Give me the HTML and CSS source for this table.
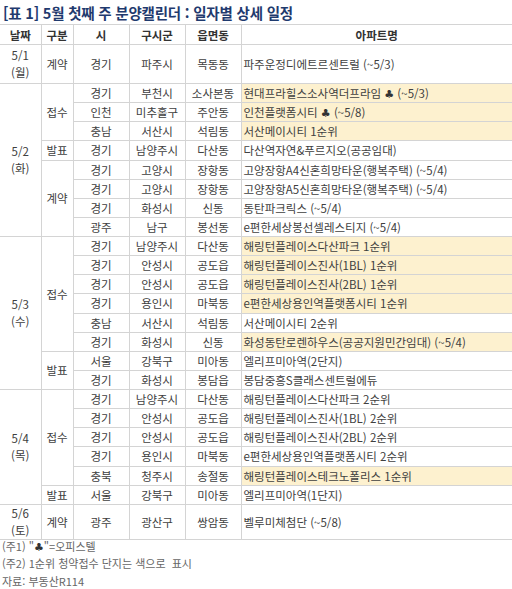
FILE: index.html
```html
<!DOCTYPE html>
<html lang="ko">
<head>
<meta charset="utf-8">
<link rel="stylesheet" href="styles.css">
</head>
<body>
<div class="title">[표 1] 5월 첫째 주 분양캘린더 : 일자별 상세 일정</div>
<table class="cal">
<colgroup><col class="c1"><col class="c2"><col class="c3"><col class="c4"><col class="c5"><col class="c6"></colgroup>
<thead>
<tr><th>날짜</th><th>구분</th><th>시</th><th>구시군</th><th>읍면동</th><th>아파트명</th></tr>
</thead>
<tbody>
<tr class="tall"><td class="date">5/1<br>(월)</td><td>계약</td><td>경기</td><td>파주시</td><td>목동동</td><td class="apt">파주운정디에트르센트럴 (~5/3)</td></tr>

<tr><td class="date" rowspan="8">5/2<br>(화)</td><td rowspan="3">접수</td><td>경기</td><td>부천시</td><td>소사본동</td><td class="apt hl">현대프라힐스소사역더프라임 <span class="club">♣</span> (~5/3)</td></tr>
<tr><td>인천</td><td>미추홀구</td><td>주안동</td><td class="apt hl">인천플랫폼시티 <span class="club">♣</span> (~5/8)</td></tr>
<tr><td>충남</td><td>서산시</td><td>석림동</td><td class="apt hl">서산메이시티 1순위</td></tr>
<tr><td>발표</td><td>경기</td><td>남양주시</td><td>다산동</td><td class="apt">다산역자연&amp;푸르지오(공공임대)</td></tr>
<tr><td rowspan="4">계약</td><td>경기</td><td>고양시</td><td>장항동</td><td class="apt">고양장항A4신혼희망타운(행복주택) (~5/4)</td></tr>
<tr><td>경기</td><td>고양시</td><td>장항동</td><td class="apt">고양장항A5신혼희망타운(행복주택) (~5/4)</td></tr>
<tr><td>경기</td><td>화성시</td><td>신동</td><td class="apt">동탄파크릭스 (~5/4)</td></tr>
<tr><td>광주</td><td>남구</td><td>봉선동</td><td class="apt">e편한세상봉선셀레스티지 (~5/4)</td></tr>

<tr><td class="date" rowspan="8">5/3<br>(수)</td><td rowspan="6">접수</td><td>경기</td><td>남양주시</td><td>다산동</td><td class="apt hl">해링턴플레이스다산파크 1순위</td></tr>
<tr><td>경기</td><td>안성시</td><td>공도읍</td><td class="apt hl">해링턴플레이스진사(1BL) 1순위</td></tr>
<tr><td>경기</td><td>안성시</td><td>공도읍</td><td class="apt hl">해링턴플레이스진사(2BL) 1순위</td></tr>
<tr><td>경기</td><td>용인시</td><td>마북동</td><td class="apt hl">e편한세상용인역플랫폼시티 1순위</td></tr>
<tr><td>충남</td><td>서산시</td><td>석림동</td><td class="apt">서산메이시티 2순위</td></tr>
<tr><td>경기</td><td>화성시</td><td>신동</td><td class="apt hl">화성동탄로렌하우스(공공지원민간임대) (~5/4)</td></tr>
<tr><td rowspan="2">발표</td><td>서울</td><td>강북구</td><td>미아동</td><td class="apt">엘리프미아역(2단지)</td></tr>
<tr><td>경기</td><td>화성시</td><td>봉담읍</td><td class="apt">봉담중흥S클래스센트럴에듀</td></tr>

<tr><td class="date" rowspan="6">5/4<br>(목)</td><td rowspan="5">접수</td><td>경기</td><td>남양주시</td><td>다산동</td><td class="apt">해링턴플레이스다산파크 2순위</td></tr>
<tr><td>경기</td><td>안성시</td><td>공도읍</td><td class="apt">해링턴플레이스진사(1BL) 2순위</td></tr>
<tr><td>경기</td><td>안성시</td><td>공도읍</td><td class="apt">해링턴플레이스진사(2BL) 2순위</td></tr>
<tr><td>경기</td><td>용인시</td><td>마북동</td><td class="apt">e편한세상용인역플랫폼시티 2순위</td></tr>
<tr><td>충북</td><td>청주시</td><td>송절동</td><td class="apt hl">해링턴플레이스테크노폴리스 1순위</td></tr>
<tr><td>발표</td><td>서울</td><td>강북구</td><td>미아동</td><td class="apt">엘리프미아역(1단지)</td></tr>

<tr class="last"><td class="date">5/6<br>(토)</td><td>계약</td><td>광주</td><td>광산구</td><td>쌍암동</td><td class="apt">벨루미체첨단 (~5/8)</td></tr>
</tbody>
</table>
<div class="notes">
<p>(주1) "<span class="club">♣</span>"=오피스텔</p>
<p>(주2) 1순위 청약접수 단지는 색으로 &nbsp;표시</p>
<p>자료: 부동산R114</p>
</div>
</body>
</html>
```
FILE: styles.css
```css
html, body {
  margin: 0;
  padding: 0;
  background: #ffffff;
}
body {
  width: 512px;
  font-family: "Noto Sans CJK KR", "Noto Sans", sans-serif;
  color: #404040;
}
.title {
  height: 24px;
  line-height: 26px;
  padding-left: 3px;
  font-size: 14.5px;
  font-weight: bold;
  color: #1f3a6e;
  letter-spacing: -0.2px;
  white-space: nowrap;
}
.cal {
  width: 512px;
  table-layout: fixed;
  border-collapse: collapse;
  font-size: 11.5px;
}
.c1 { width: 41px; }
.c2 { width: 32px; }
.c3 { width: 56px; }
.c4 { width: 56px; }
.c5 { width: 56px; }
.c6 { width: 271px; }
.cal th, .cal td {
  border: 1px solid #d4d4d4;
  padding: 0;
  text-align: center;
  vertical-align: middle;
  white-space: nowrap;
  overflow: hidden;
  line-height: 14px;
}
.cal tr > :first-child { border-left: none; }
.cal tr > :last-child { border-right: none; }
.cal th {
  height: 19px;
  font-weight: bold;
  color: #333;
}
.cal tbody tr { height: 19.14px; }
.cal tbody tr.tall { height: 39px; }
.cal tbody tr.last { height: 30px; }
.cal td.date { line-height: 17px; }
.cal td.apt {
  text-align: left;
  padding-left: 2px;
}
.cal td.hl { background: #fdf1cf; }
.club {
  font-family: "DejaVu Sans", sans-serif;
  font-size: 11px;
  line-height: 10px;
  color: #333;
}
.notes {
  margin-top: -2px;
  font-size: 11px;
  color: #666;
}
.notes p {
  margin: 0;
  padding-left: 2px;
  line-height: 17.5px;
}
```
